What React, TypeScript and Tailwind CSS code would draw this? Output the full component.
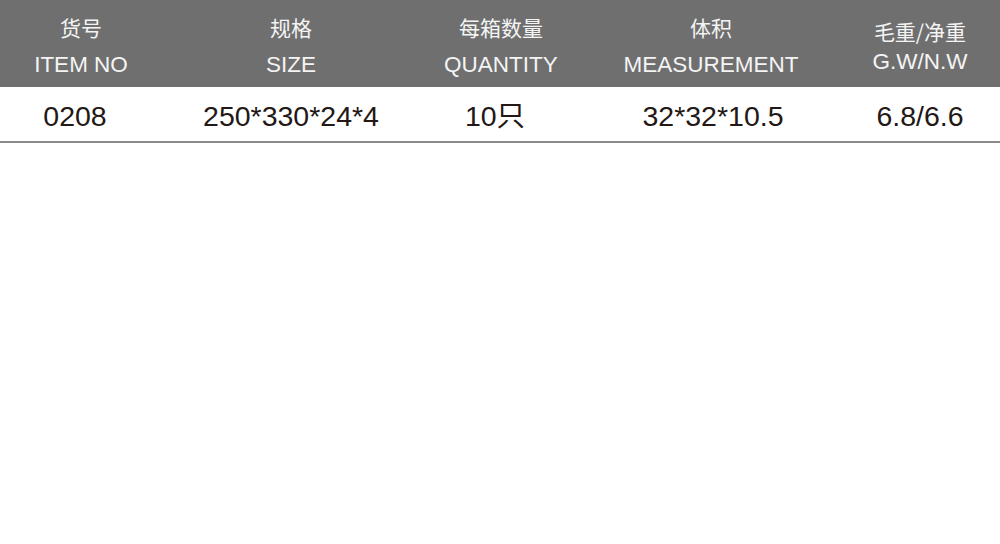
import React from "react";

const cols = [
  { zh: "货号", en: "ITEM NO", val: "0208" },
  { zh: "规格", en: "SIZE", val: "250*330*24*4" },
  { zh: "每箱数量", en: "QUANTITY", val: "10只" },
  { zh: "体积", en: "MEASUREMENT", val: "32*32*10.5" },
  { zh: "毛重/净重", en: "G.W/N.W", val: "6.8/6.6" },
];

// column widths / padding so the text centres sit at 81, 291, 501, 711, 920
const headCls = ["pr-6", "", "", "", "pl-6"];
const valCls = ["pr-[36px]", "", "pr-3", "pl-1", "pl-6"];

const App = () => {
  return (
    <div
      className="w-[1000px] h-[544px] bg-white"
      style={{ fontFamily: '"Liberation Sans", Arial, "Noto Sans CJK SC", sans-serif' }}
    >
      {/* cabecera */}
      <div className="grid grid-cols-[186px_210px_210px_210px_184px] h-[87px] bg-[#6f6f6f] text-[#f4f4f4]">
        {cols.map((c, i) => (
          <div
            key={c.en}
            className={`flex flex-col items-center ${i === 4 ? "pt-[18px]" : "pt-[12px]"} ${headCls[i]}`}
          >
            <span
              className={`text-[21px] ${i === 4 ? "leading-[26px]" : "leading-[30px]"}`}
              style={{ fontFamily: '"Noto Sans CJK SC", sans-serif' }}
            >
              {c.zh}
            </span>
            <span className={`text-[22.5px] leading-[30px] ${i === 4 ? "mt-[3px]" : "mt-[8px]"}`}>
              {c.en}
            </span>
          </div>
        ))}
      </div>
      {/* fila de datos */}
      <div className="grid grid-cols-[186px_210px_210px_210px_184px] h-[56px] border-b-2 border-[#8a8a8a] text-[#231815]">
        {cols.map((c, i) => (
          <div
            key={c.val}
            className={`flex items-center justify-center pt-[5px] text-[28.5px] ${valCls[i]}`}
          >
            {c.val}
          </div>
        ))}
      </div>
    </div>
  );
};

export default App;
